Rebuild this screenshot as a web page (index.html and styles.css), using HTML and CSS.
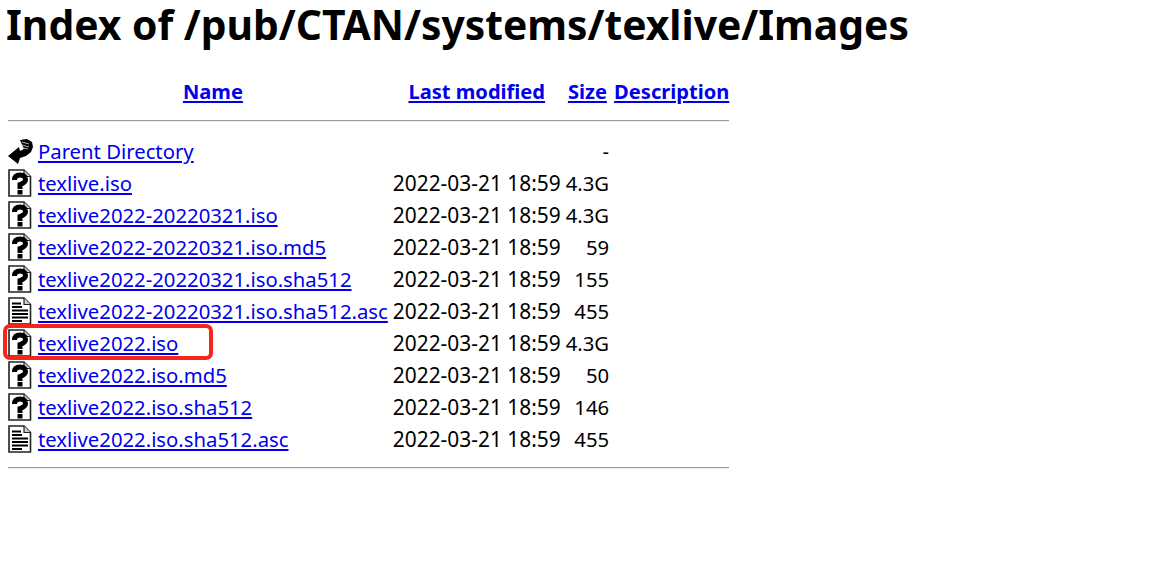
FILE: index.html
```html
<!DOCTYPE html>
<html lang="en">
<head>
    <meta charset="UTF-8">
    <title>Index of /pub/CTAN/systems/texlive/Images</title>
    <link rel="stylesheet" href="styles.css">
</head>
<body>
    <svg class="defs" width="0" height="0">
        <symbol id="icon-back" viewBox="0 0 25 25">
            <path d="M12 1 L19 0 L24 3 L25 8 L23 13 L18 17 L12 19 L10 25 L0 17 L11 8 L12 12 L16 10 Z" fill="#000"/>
            <path d="M14 3 L21 5 M14 6 L21 8 M15 9 L20 10" stroke="#aaa" stroke-width="1.2" fill="none"/>
        </symbol>
        <symbol id="icon-unknown" viewBox="0 0 24 28">
            <path d="M1 1 H16 L22.5 7.5 V27 H1 Z" fill="#fff" stroke="#222" stroke-width="1.6"/>
            <path d="M16 1 V7.5 H22.5" fill="#ccc" stroke="#222" stroke-width="1.2"/>
            <path d="M6.5 11 Q6.5 6 12 6 Q17.5 6 17.5 10.5 Q17.5 13.5 12 15.5 V20" fill="none" stroke="#000" stroke-width="5"/>
            <rect x="9.5" y="21" width="5" height="4.5" fill="#000"/>
        </symbol>
        <symbol id="icon-text" viewBox="0 0 24 28">
            <path d="M1 1 H16 L22.5 7.5 V27 H1 Z" fill="#fff" stroke="#222" stroke-width="1.6"/>
            <path d="M16 1 V7.5 H22.5" fill="#ccc" stroke="#222" stroke-width="1.2"/>
            <path d="M4 6.5 H13 M4 10 H14 M4 13.5 H20 M4 17 H20 M4 20.5 H20 M4 24 H14" stroke="#000" stroke-width="2" fill="none"/>
        </symbol>
    </svg>

    <h1>Index of /pub/CTAN/systems/texlive/Images</h1>

    <table class="listing">
        <tr class="head">
            <th class="col-icon"></th>
            <th><a href="#">Name</a></th>
            <th><a href="#">Last modified</a></th>
            <th><a href="#">Size</a></th>
            <th><a href="#">Description</a></th>
        </tr>
        <tr><th colspan="5" class="rule rule-top"><hr></th></tr>
        <tr>
            <td class="col-icon"><svg class="icon icon-back"><use href="#icon-back"/></svg></td>
            <td><a href="#">Parent Directory</a></td>
            <td></td>
            <td class="size">-</td>
            <td></td>
        </tr>
        <tr>
            <td class="col-icon"><svg class="icon"><use href="#icon-unknown"/></svg></td>
            <td><a href="#">texlive.iso</a></td>
            <td class="date">2022-03-21 18:59</td>
            <td class="size">4.3G</td>
            <td></td>
        </tr>
        <tr>
            <td class="col-icon"><svg class="icon"><use href="#icon-unknown"/></svg></td>
            <td><a href="#">texlive2022-20220321.iso</a></td>
            <td class="date">2022-03-21 18:59</td>
            <td class="size">4.3G</td>
            <td></td>
        </tr>
        <tr>
            <td class="col-icon"><svg class="icon"><use href="#icon-unknown"/></svg></td>
            <td><a href="#">texlive2022-20220321.iso.md5</a></td>
            <td class="date">2022-03-21 18:59</td>
            <td class="size">59</td>
            <td></td>
        </tr>
        <tr>
            <td class="col-icon"><svg class="icon"><use href="#icon-unknown"/></svg></td>
            <td><a href="#">texlive2022-20220321.iso.sha512</a></td>
            <td class="date">2022-03-21 18:59</td>
            <td class="size">155</td>
            <td></td>
        </tr>
        <tr>
            <td class="col-icon"><svg class="icon"><use href="#icon-text"/></svg></td>
            <td><a href="#">texlive2022-20220321.iso.sha512.asc</a></td>
            <td class="date">2022-03-21 18:59</td>
            <td class="size">455</td>
            <td></td>
        </tr>
        <tr>
            <td class="col-icon"><svg class="icon"><use href="#icon-unknown"/></svg></td>
            <td class="marked"><a href="#">texlive2022.iso</a><span class="highlight"></span></td>
            <td class="date">2022-03-21 18:59</td>
            <td class="size">4.3G</td>
            <td></td>
        </tr>
        <tr>
            <td class="col-icon"><svg class="icon"><use href="#icon-unknown"/></svg></td>
            <td><a href="#">texlive2022.iso.md5</a></td>
            <td class="date">2022-03-21 18:59</td>
            <td class="size">50</td>
            <td></td>
        </tr>
        <tr>
            <td class="col-icon"><svg class="icon"><use href="#icon-unknown"/></svg></td>
            <td><a href="#">texlive2022.iso.sha512</a></td>
            <td class="date">2022-03-21 18:59</td>
            <td class="size">146</td>
            <td></td>
        </tr>
        <tr>
            <td class="col-icon"><svg class="icon"><use href="#icon-text"/></svg></td>
            <td><a href="#">texlive2022.iso.sha512.asc</a></td>
            <td class="date">2022-03-21 18:59</td>
            <td class="size">455</td>
            <td></td>
        </tr>
        <tr><th colspan="5" class="rule"><hr></th></tr>
    </table>
</body>
</html>
```

FILE: styles.css
```css
body {
    margin: 0;
    padding: 0 8px;
    background: #ffffff;
    color: #000000;
    font-family: "Noto Sans", "Noto Sans CJK SC", sans-serif;
    font-size: 20.3px;
}

.defs {
    display: block;
    height: 0;
}

h1 {
    margin: 0 0 0 -2px;
    font-size: 40.8px;
    line-height: 48px;
    font-weight: 700;
}

a {
    color: #0000ee;
}

.listing {
    margin-top: 28px;
    border-collapse: collapse;
}

.listing th,
.listing td {
    padding: 0 0 0 5px;
    height: 32px;
    line-height: 32px;
    white-space: nowrap;
}

.listing .col-icon {
    width: 25px;
    padding: 0;
    vertical-align: middle;
}

.head th {
    font-size: 20.1px;
    font-weight: 700;
    text-align: center;
}

.listing .rule {
    padding: 12px 0 0;
    height: 12px;
    line-height: 0;
    vertical-align: top;
}

.listing .rule-top {
    height: 15px;
}

hr {
    margin: 0;
    border: 0;
    border-top: 1px solid #999999;
    border-bottom: 1px solid #eeeeee;
}

.icon {
    display: block;
    width: 24px;
    height: 28px;
}

.icon-back {
    width: 25px;
    height: 25px;
}

.date {
    font-size: 20.9px;
}

.size {
    text-align: right;
}

.marked {
    position: relative;
}

.highlight {
    position: absolute;
    left: -30px;
    top: -3px;
    box-sizing: border-box;
    width: 210px;
    height: 36px;
    border: 4px solid #f5251c;
    border-radius: 7px;
}
```
